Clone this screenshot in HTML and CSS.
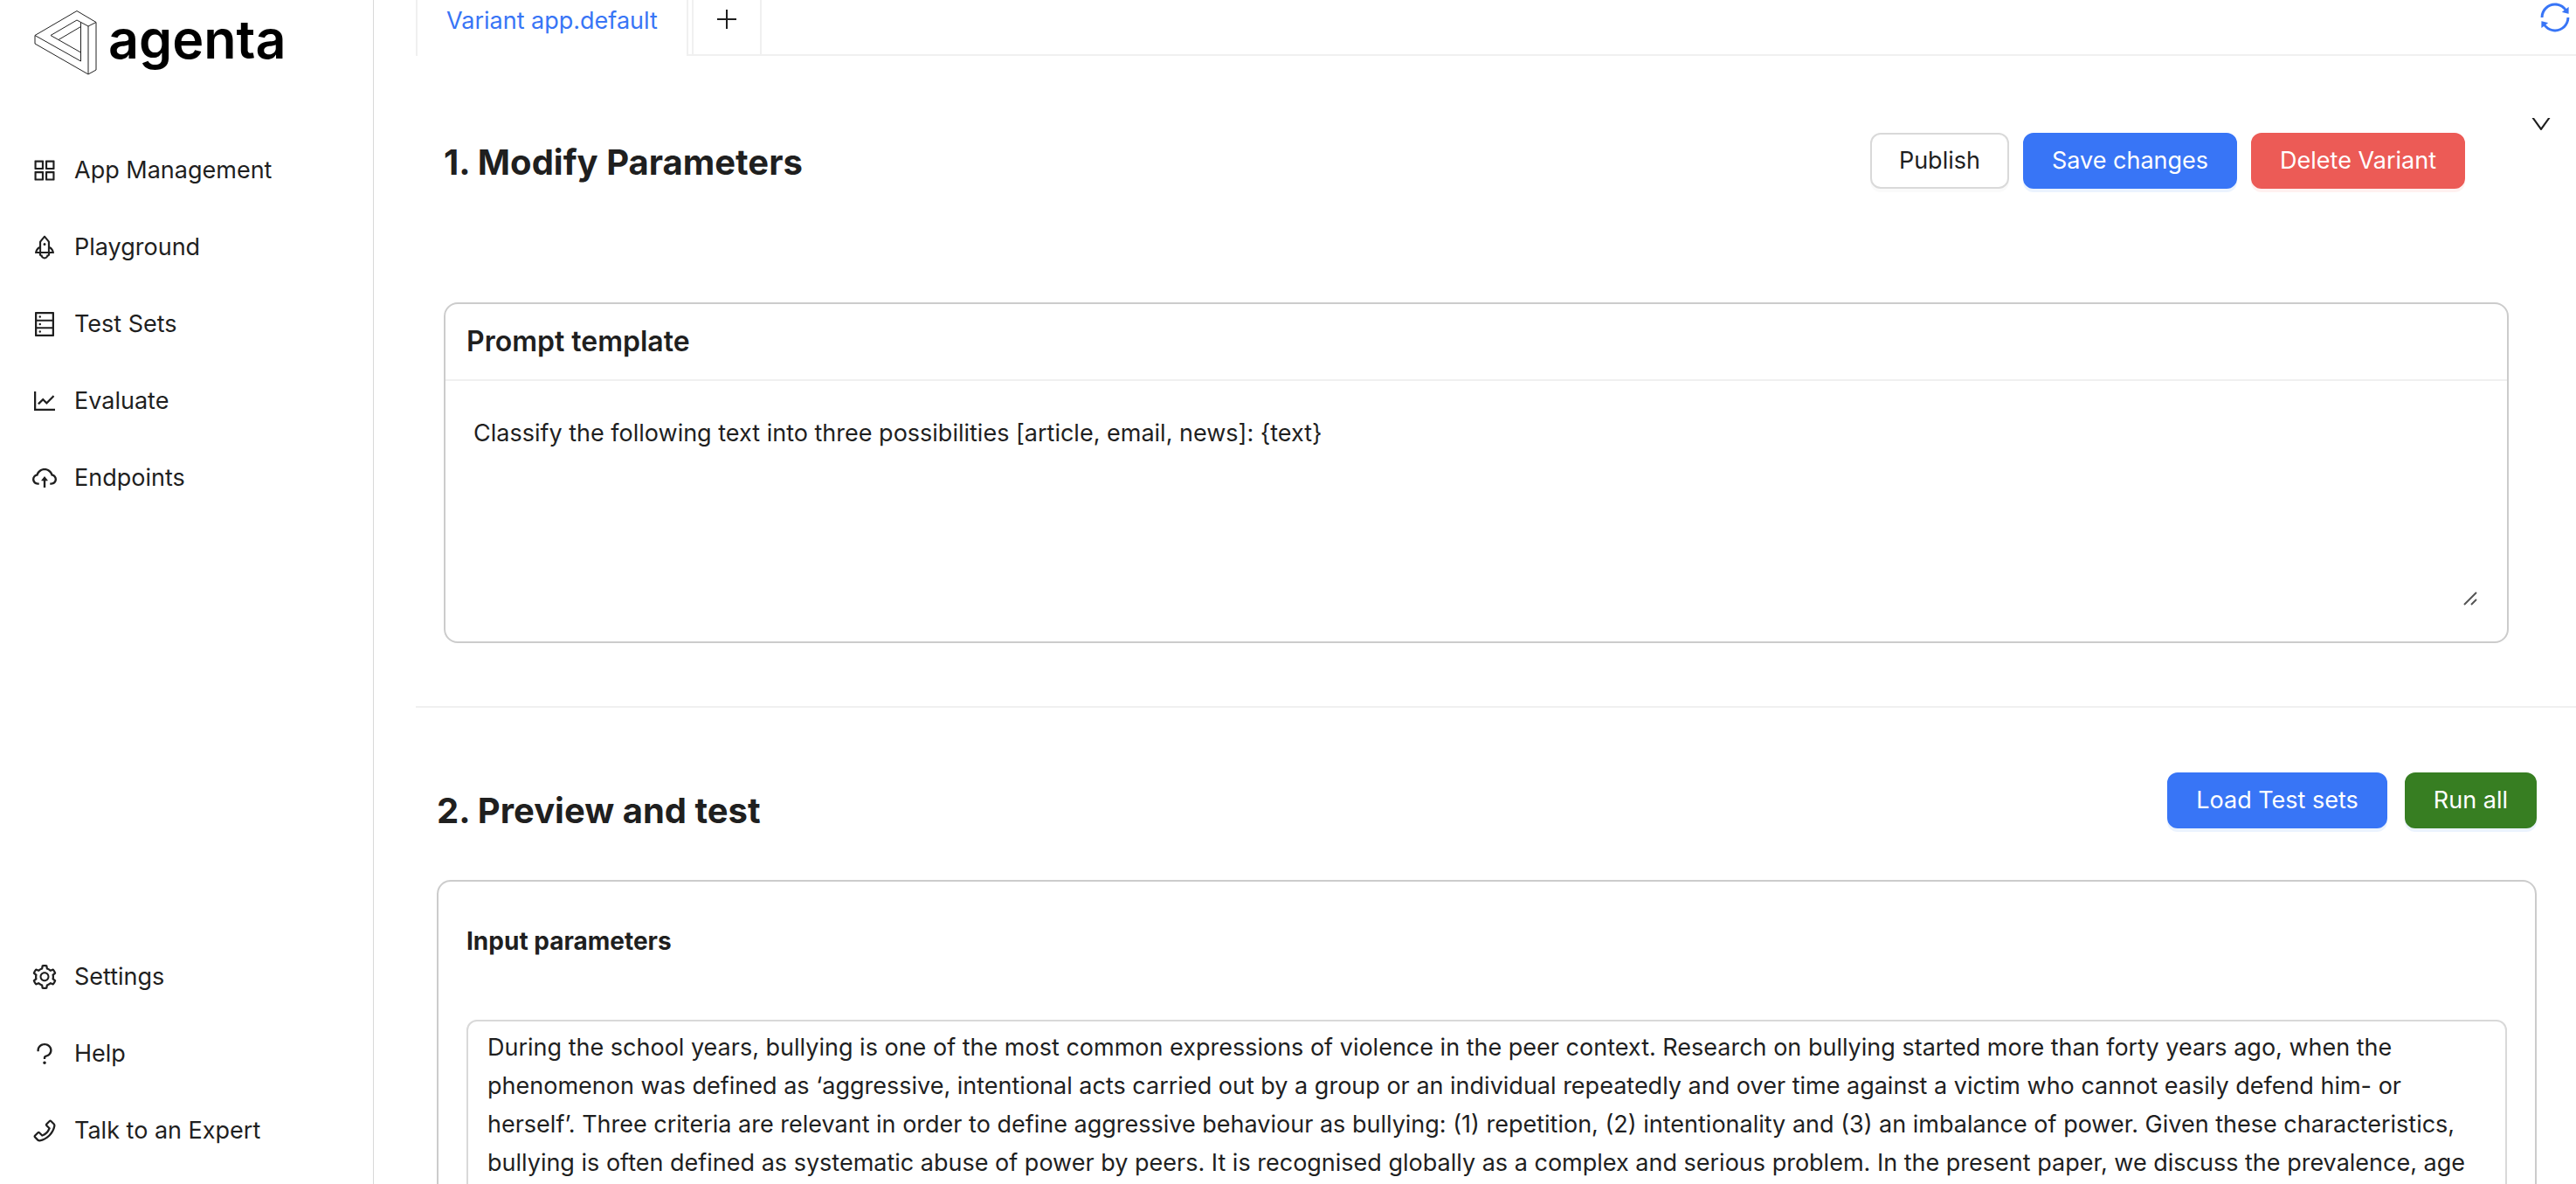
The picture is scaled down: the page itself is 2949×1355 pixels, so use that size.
FILE: index.html
```html
<!DOCTYPE html>
<html lang="en">
<head>
<meta charset="utf-8">
<title>agenta - Playground</title>
<link rel="stylesheet" href="styles.css">
</head>
<body>
<div class="app">
  <aside class="sidebar">
    <a class="logo" href="#">
      <svg class="logo-mark" viewBox="39 10 72 76" fill="none" stroke="#222" stroke-width="1" stroke-linejoin="round" aria-hidden="true">
        <path d="M40 39.500 88 11.500 110 24.500V79L101 84 40 49ZM101 84V29L110 24.500M101 29 88 22 58 39.500 92.500 59M67 44.500 92.500 29.500M92.500 24.500V69L40 39.500"/>
      </svg>
      <span class="logo-name">agenta</span>
    </a>
    <nav class="menu" aria-label="Main">
      <a class="menu-item" href="#"><svg class="icon-menu" viewBox="0 0 1024 1024" aria-hidden="true"><path d="M464 144H160c-8.800 0-16 7.200-16 16v304c0 8.800 7.200 16 16 16h304c8.800 0 16-7.200 16-16V160c0-8.800-7.200-16-16-16zm-52 268H212V212h200v200zm452-268H560c-8.800 0-16 7.200-16 16v304c0 8.800 7.200 16 16 16h304c8.800 0 16-7.200 16-16V160c0-8.800-7.200-16-16-16zm-52 268H612V212h200v200zM464 544H160c-8.800 0-16 7.200-16 16v304c0 8.800 7.200 16 16 16h304c8.800 0 16-7.200 16-16V560c0-8.800-7.200-16-16-16zm-52 268H212V612h200v200zm452-268H560c-8.800 0-16 7.200-16 16v304c0 8.800 7.200 16 16 16h304c8.800 0 16-7.200 16-16V560c0-8.800-7.200-16-16-16zm-52 268H612V612h200v200z"/></svg>App Management</a>
      <a class="menu-item" href="#"><svg class="icon-menu" viewBox="0 0 1024 1024" aria-hidden="true"><path d="M864 736c0-111.600-65.400-208-160-252.900V317.300c0-15.100-5.300-29.700-15.100-41.200L536.500 95.400C530.100 87.800 521 84 512 84s-18.100 3.800-24.500 11.400L335.100 276.100a63.970 63.970 0 00-15.100 41.200v165.800C225.400 528 160 624.400 160 736h156.500c-2.300 7.200-3.500 15-3.500 23.800 0 22.100 7.600 43.700 21.400 60.800a97.200 97.200 0 0043.100 30.600c23.100 54 75.600 88.800 134.500 88.800 29.100 0 57.300-8.600 81.400-24.800 23.600-15.800 41.900-37.900 53-64a97 97 0 0043.100-30.500 97.520 97.520 0 0021.400-60.800c0-8.400-1.100-16.400-3.100-23.800H864zM762.300 621.400c9.400 14.600 17 30.300 22.500 46.600H700V558.700a211.600 211.600 0 0162.300 62.700zM388 483.100V318.800l124-147 124 147V668H388V483.100zM239.200 668c5.500-16.300 13.100-32 22.500-46.600 16.300-25.200 37.500-46.500 62.300-62.700V668h-84.800zm388.900 116.200c-5.200 3-11.200 4.200-17.100 3.400l-19.500-2.400-2.800 19.400c-5.400 37.900-38.400 66.500-76.700 66.500-38.300 0-71.300-28.600-76.700-66.500l-2.800-19.500-19.500 2.500a27.700 27.700 0 01-17.100-3.500c-8.700-5-14.100-14.300-14.100-24.400 0-10.600 5.900-19.400 14.600-23.800h231.300c8.800 4.500 14.600 13.300 14.600 23.800-.1 10.200-5.500 19.600-14.200 24.500zM464 400a48 48 0 1096 0 48 48 0 10-96 0z"/></svg>Playground</a>
      <a class="menu-item" href="#"><svg class="icon-menu" viewBox="0 0 1024 1024" aria-hidden="true"><path d="M832 64H192c-17.700 0-32 14.300-32 32v832c0 17.700 14.300 32 32 32h640c17.700 0 32-14.300 32-32V96c0-17.700-14.300-32-32-32zm-600 72h560v208H232V136zm560 480H232V408h560v208zm0 272H232V680h560v208zM304 240a40 40 0 1080 0 40 40 0 10-80 0zm0 272a40 40 0 1080 0 40 40 0 10-80 0zm0 272a40 40 0 1080 0 40 40 0 10-80 0z"/></svg>Test Sets</a>
      <a class="menu-item" href="#"><svg class="icon-menu" viewBox="0 0 1024 1024" aria-hidden="true"><path d="M888 792H200V168c0-4.400-3.600-8-8-8h-56c-4.400 0-8 3.600-8 8v688c0 4.400 3.600 8 8 8h752c4.400 0 8-3.600 8-8v-56c0-4.400-3.600-8-8-8zM305.800 637.700c3.100 3.100 8.100 3.100 11.300 0l138.300-137.600L583 628.500c3.100 3.100 8.200 3.100 11.300 0l275.400-275.300c3.100-3.100 3.100-8.200 0-11.300l-39.600-39.600a8.030 8.030 0 00-11.300 0l-230 229.900L461.400 404a8.030 8.030 0 00-11.300 0L266.300 586.700a8.030 8.030 0 000 11.300l39.500 39.700z"/></svg>Evaluate</a>
      <a class="menu-item" href="#"><svg class="icon-menu" viewBox="0 0 1024 1024" aria-hidden="true"><path d="M518.300 459a8 8 0 00-12.600 0l-112 141.700a7.980 7.980 0 006.300 12.900h73.900V856c0 4.400 3.600 8 8 8h60c4.400 0 8-3.600 8-8V613.700H624c6.700 0 10.400-7.700 6.300-12.900L518.300 459z"/><path d="M811.400 366.700C765.600 245.900 648.900 160 512.200 160S258.800 245.800 213 366.600C127.300 389.100 64 467.200 64 560c0 110.500 89.500 200 199.900 200H304c4.400 0 8-3.600 8-8v-60c0-4.400-3.600-8-8-8h-40.100c-33.700 0-65.400-13.400-89-37.700-23.500-24.200-36-56.800-34.900-90.600.9-26.400 9.900-51.200 26.200-72.100 16.700-21.300 40.100-36.800 66.100-43.700l37.900-9.900 13.900-36.600c8.600-22.800 20.600-44.100 35.700-63.400a245.600 245.600 0 0152.400-49.900c41.100-28.900 89.500-44.200 140-44.200s98.900 15.300 140 44.200c19.900 14 37.500 30.800 52.400 49.900 15.100 19.300 27.100 40.700 35.700 63.400l13.800 36.500 37.800 10C846.100 454.500 884 503.800 884 560c0 33.100-12.900 64.300-36.300 87.700a123.070 123.070 0 01-87.600 36.300H720c-4.400 0-8 3.600-8 8v60c0 4.400 3.600 8 8 8h40.100C870.500 760 960 670.500 960 560c0-92.700-63.100-170.700-148.600-193.300z"/></svg>Endpoints</a>
    </nav>
    <nav class="menu menu-bottom" aria-label="Support">
      <a class="menu-item" href="#"><svg class="icon-menu" viewBox="0 0 1024 1024" aria-hidden="true"><path d="M924.800 625.700l-65.500-56c3.100-19 4.700-38.400 4.700-57.800s-1.600-38.800-4.700-57.800l65.500-56a32.030 32.030 0 009.300-35.200l-.9-2.600a443.740 443.740 0 00-79.700-137.900l-1.800-2.100a32.120 32.120 0 00-35.100-9.500l-81.300 28.900c-30-24.600-63.500-44-99.700-57.600l-15.700-85a32.050 32.050 0 00-25.800-25.700l-2.700-.5c-52.100-9.400-106.900-9.400-159 0l-2.700.5a32.050 32.050 0 00-25.800 25.700l-15.800 85.400a351.860 351.860 0 00-99 57.400l-81.900-29.100a32 32 0 00-35.100 9.500l-1.800 2.100a446.020 446.020 0 00-79.700 137.900l-.9 2.600c-4.500 12.500-.8 26.500 9.300 35.200l66.300 56.600c-3.100 18.800-4.600 38-4.600 57.100 0 19.200 1.500 38.400 4.600 57.100L99 625.500a32.030 32.030 0 00-9.300 35.200l.9 2.600c18.100 50.400 44.900 96.900 79.700 137.900l1.800 2.100a32.120 32.120 0 0035.100 9.500l81.900-29.100c29.800 24.500 63.100 43.900 99 57.400l15.800 85.400a32.050 32.050 0 0025.800 25.700l2.700.5a449.400 449.400 0 00159 0l2.700-.5a32.050 32.050 0 0025.800-25.700l15.700-85a350 350 0 0099.700-57.600l81.300 28.900a32 32 0 0035.100-9.500l1.800-2.100c34.800-41.100 61.600-87.500 79.700-137.900l.9-2.600c4.500-12.300.8-26.300-9.300-35zM788.300 465.900c2.500 15.100 3.800 30.600 3.800 46.100s-1.300 31-3.800 46.100l-6.600 40.100 74.700 63.900a370.030 370.030 0 01-42.600 73.600L721 702.800l-31.400 25.800c-23.900 19.600-50.500 35-79.300 45.800l-38.100 14.300-17.900 97a377.500 377.500 0 01-85 0l-17.900-97.200-37.800-14.500c-28.500-10.800-55-26.200-78.700-45.700l-31.400-25.900-93.400 33.200c-17-22.900-31.200-47.600-42.600-73.600l75.500-64.500-6.500-40c-2.400-14.900-3.700-30.300-3.700-45.500 0-15.300 1.200-30.600 3.700-45.500l6.500-40-75.500-64.500c11.300-26.100 25.600-50.700 42.600-73.600l93.400 33.200 31.400-25.900c23.700-19.500 50.200-34.900 78.700-45.700l37.900-14.300 17.900-97.200c28.100-3.200 56.800-3.200 85 0l17.900 97 38.100 14.300c28.700 10.800 55.400 26.200 79.300 45.800l31.400 25.800 92.800-32.900c17 22.900 31.200 47.600 42.600 73.600L781.800 426l6.500 39.900zM512 326c-97.200 0-176 78.800-176 176s78.800 176 176 176 176-78.800 176-176-78.800-176-176-176zm79.200 255.200A111.600 111.600 0 01512 614c-29.900 0-58-11.700-79.200-32.800A111.600 111.600 0 01400 502c0-29.900 11.700-58 32.800-79.200C454 401.600 482.100 390 512 390c29.900 0 58 11.600 79.200 32.800A111.600 111.600 0 01624 502c0 29.900-11.700 58-32.800 79.200z"/></svg>Settings</a>
      <a class="menu-item" href="#"><svg class="icon-menu" viewBox="0 0 1024 1024" aria-hidden="true"><path d="M764 280.900c-14-30.600-33.900-58.100-59.300-81.600C653.100 151.400 584.600 125 512 125s-141.100 26.400-192.700 74.200c-25.400 23.600-45.300 51-59.300 81.700-14.600 32-22 65.900-22 100.900v27c0 6.200 5 11.200 11.200 11.200h54c6.200 0 11.200-5 11.200-11.200v-27c0-99.500 88.600-180.400 197.600-180.400s197.600 80.900 197.600 180.400c0 40.800-14.500 79.200-42 111.200-27.200 31.700-65.600 54.400-108.100 64-24.300 5.500-46.200 19.200-61.700 38.800a110.850 110.850 0 00-23.900 68.600v31.400c0 6.200 5 11.200 11.200 11.200h54c6.200 0 11.200-5 11.200-11.200v-31.400c0-15.700 10.900-29.500 26-32.900 58.400-13.200 111.400-44.700 149.300-88.700 19.100-22.300 34-47.100 44.300-74 10.700-27.900 16.100-57.200 16.100-87 0-35-7.400-69-22-100.900zM512 787c-30.900 0-56 25.100-56 56s25.100 56 56 56 56-25.100 56-56-25.100-56-56-56z"/></svg>Help</a>
      <a class="menu-item" href="#"><svg class="icon-menu" viewBox="0 0 1024 1024" aria-hidden="true"><path d="M877.100 238.700L770.600 132.300c-13-13-30.400-20.300-48.800-20.300s-35.800 7.200-48.800 20.300L558.300 246.800c-13 13-20.300 30.500-20.300 48.900 0 18.500 7.200 35.800 20.300 48.900l89.600 89.700a405.460 405.460 0 01-86.400 127.300c-36.700 36.900-79.600 66-127.200 86.600l-89.600-89.700c-13-13-30.400-20.300-48.800-20.300a68.200 68.200 0 00-48.800 20.300L132.300 673c-13 13-20.300 30.500-20.300 48.900 0 18.500 7.200 35.800 20.300 48.900l106.400 106.400c22.200 22.200 52.800 34.900 84.200 34.900 6.500 0 12.800-.5 19.200-1.600 132.400-21.800 263.800-92.300 369.900-198.300C818 606 888.400 474.600 910.400 342.100c6.300-37.600-6.300-76.300-33.300-103.400zm-37.600 91.500c-19.500 117.900-82.900 235.500-178.400 331s-213 158.900-330.900 178.400c-14.800 2.500-30-2.500-40.800-13.200L184.900 721.900 295.700 611l119.800 120 .9.9 21.600-8a481.290 481.290 0 00285.700-285.800l8-21.600-120.800-120.700 110.800-110.900 104.500 104.500c10.800 10.800 15.800 26 13.300 40.800z"/></svg>Talk to an Expert</a>
    </nav>
  </aside>

  <main class="content">
    <div class="tab-bar">
      <div class="tabs" role="tablist">
        <button class="tab" type="button" role="tab" aria-selected="true">Variant app.default</button>
        <button class="tab-add" type="button" aria-label="Add variant">
          <svg class="icon" viewBox="0 0 28 28" fill="none" stroke="currentColor" stroke-width="2" aria-hidden="true"><path d="M14 3V25M3 14H25"/></svg>
        </button>
      </div>
      <button class="icon-button refresh" type="button" aria-label="Refresh">
        <svg class="icon-large" viewBox="0 0 1024 1024" aria-hidden="true"><path d="M168 504.200c1-43.700 10-86.100 26.900-126 17.300-41 42.100-77.700 73.700-109.400S337 212.300 378 195c42.400-17.900 87.400-27 133.900-27s91.500 9.100 133.800 27A341.500 341.500 0 01755 268.800c9.900 9.900 19.200 20.400 27.800 31.400l-60.200 47a8 8 0 003 14.100l175.700 43c5 1.200 9.900-2.600 9.900-7.700l.8-180.900c0-6.700-7.700-10.500-12.900-6.300l-56.400 44.100C765.800 155.100 646.200 92 511.800 92 282.700 92 96.300 275.600 92 503.800a8 8 0 008 8.200h60c4.400 0 7.900-3.500 8-7.800zm756 7.800h-60c-4.400 0-7.900 3.500-8 7.800-1 43.700-10 86.100-26.900 126-17.300 41-42.100 77.800-73.700 109.400A342.450 342.450 0 01512.100 856a342.240 342.240 0 01-243.200-100.800c-9.900-9.900-19.200-20.400-27.800-31.400l60.200-47a8 8 0 00-3-14.100l-175.700-43c-5-1.200-9.900 2.600-9.900 7.700l-.7 181c0 6.700 7.700 10.500 12.900 6.300l56.400-44.100C258.200 868.900 377.800 932 512.200 932c229.200 0 415.500-183.700 419.800-411.800a8 8 0 00-8-8.200z"/></svg>
      </button>
    </div>

    <section class="parameters">
      <header class="parameters-header">
        <h2 class="title">1. Modify Parameters</h2>
        <div class="actions">
          <button class="button" type="button">Publish</button>
          <button class="button button-primary" type="button">Save changes</button>
          <button class="button button-danger" type="button">Delete Variant</button>
        </div>
        <button class="icon-button" type="button" aria-label="Collapse">
          <svg class="icon" viewBox="0 0 1024 1024" aria-hidden="true"><path d="M884 256h-75c-5.100 0-9.900 2.500-12.900 6.600L512 654.200 227.900 262.600c-3-4.100-7.800-6.600-12.900-6.600h-75c-6.500 0-10.300 7.400-6.500 12.700l352.600 486.100c12.800 17.600 39 17.600 51.700 0l352.600-486.100c3.900-5.300.1-12.700-6.400-12.700z"/></svg>
        </button>
      </header>
      <div class="card">
        <label class="card-title" for="prompt">Prompt template</label>
        <div class="prompt-body">
          <textarea class="prompt" id="prompt">Classify the following text into three possibilities [article, email, news]: {text}</textarea>
          <svg class="grip" viewBox="0 0 16 16" fill="none" stroke="#555" stroke-width="2" aria-hidden="true"><path d="M1 15 15 1M9 15 15 9"/></svg>
        </div>
      </div>
    </section>

    <section class="preview">
      <header class="preview-header">
        <h2 class="title">2. Preview and test</h2>
        <div class="preview-actions">
          <button class="button button-primary" type="button">Load Test sets</button>
          <button class="button button-run" type="button">Run all</button>
        </div>
      </header>
      <div class="card card-test">
        <label class="test-label" for="input-text">Input parameters</label>
        <textarea class="test-input" id="input-text" rows="6">During the school years, bullying is one of the most common expressions of violence in the peer context. Research on bullying started more than forty years ago, when the phenomenon was defined as ‘aggressive, intentional acts carried out by a group or an individual repeatedly and over time against a victim who cannot easily defend him- or herself’. Three criteria are relevant in order to define aggressive behaviour as bullying: (1) repetition, (2) intentionality and (3) an imbalance of power. Given these characteristics, bullying is often defined as systematic abuse of power by peers. It is recognised globally as a complex and serious problem. In the present paper, we discuss the prevalence, age</textarea>
      </div>
    </section>
  </main>
</div>
</body>
</html>
```
FILE: styles.css
```css
*, *::before, *::after { box-sizing: border-box; }

body {
  margin: 0;
  background: #fff;
  color: #1f1f1f;
  font-family: Inter, "Liberation Sans", sans-serif;
  font-size: 27px;
  line-height: 44px;
}

button, textarea { font: inherit; color: inherit; }
a { color: inherit; text-decoration: none; }
svg { display: block; flex: none; fill: currentColor; }
svg[fill="none"] { fill: none; }

.app { display: flex; height: 100vh; overflow: hidden; }

.sidebar {
  display: flex;
  flex-direction: column;
  flex: 0 0 428px;
  padding: 11px 8px 21px;
  border-right: 1px solid #d9d9d9;
}

.logo { display: flex; align-items: flex-start; gap: 13px; height: 76px; padding-left: 31px; }
.logo-mark { width: 72px; height: 76px; }
.logo-name {
  color: #000;
  font-size: 61px;
  font-weight: 600;
  line-height: 68px;
}

.menu { display: flex; flex-direction: column; gap: 8px; margin-top: 68px; }
.menu-bottom { margin-top: auto; }
.menu-item { display: flex; align-items: center; gap: 18px; height: 80px; padding-left: 27px; }

.icon { width: 28px; height: 28px; }
.icon-menu { width: 32px; height: 32px; }
.icon-large { width: 40px; height: 40px; }
.icon-button { padding: 0; border: 0; background: none; }
.refresh { color: #3875f6; }

.content { flex: 1; min-width: 0; padding-left: 48px; overflow: hidden; }

.tab-bar {
  display: flex;
  justify-content: space-between;
  align-items: flex-start;
  height: 64px;
  padding-right: 4px;
  box-shadow: inset 0 -2px #f0f0f0;
}
.tabs { display: flex; gap: 4px; }
.tab {
  height: 64px;
  padding: 0 33px 16px;
  border: solid #f0f0f0;
  border-width: 0 2px;
  background: #fff;
  color: #3875f6;
  line-height: 48px;
}
.tab-add {
  display: flex;
  justify-content: center;
  width: 80px;
  height: 64px;
  padding: 8px 0;
  border: solid #f0f0f0;
  border-width: 0 2px 2px;
  background: #fff;
}

.title { margin: 0; font-size: 40px; font-weight: 700; line-height: 48px; }

.parameters { padding: 64px 0 72px 32px; border-bottom: 2px solid #f0f0f0; }
.parameters-header { display: flex; align-items: flex-start; padding-right: 26px; }
.parameters-header .title { flex: 1; padding-top: 34px; }
.actions { display: flex; gap: 16px; padding-top: 24px; margin-right: 73px; }

.button {
  height: 64px;
  padding: 0 31px;
  border: 2px solid #d9d9d9;
  border-radius: 12px;
  background: #fff;
  line-height: 44px;
  box-shadow: 0 4px rgba(0, 0, 0, 0.02);
}
.button-primary { border-color: #3875f6; background: #3875f6; color: #fff; box-shadow: 0 4px #ebf3fe; }
.button-danger { border-color: #ec5b56; background: #ec5b56; color: #fff; box-shadow: 0 4px #fff1f0; }
.button-run { border-color: #377e22; background: #377e22; color: #fff; box-shadow: 0 4px #ebf3fe; }

.card { border: 2px solid #ccc; border-radius: 16px; }
.parameters .card { margin: 130px 77px 0 0; }
.card-title {
  display: block;
  padding: 20px 24px;
  border-bottom: 2px solid #f0f0f0;
  font-size: 32px;
  font-weight: 600;
  line-height: 46px;
}
.prompt-body { position: relative; padding: 30px 32px 38px; }
.prompt {
  display: block;
  width: 100%;
  height: 230px;
  padding: 8px 0;
  border: 0;
  background: none;
  resize: none;
}
.grip { position: absolute; right: 34px; bottom: 41px; width: 16px; height: 16px; }

.preview { padding: 74px 45px 0 24px; }
.preview-header { display: flex; justify-content: space-between; align-items: flex-start; }
.preview-header .title { padding-top: 20px; }
.preview-actions { display: flex; gap: 20px; }

.card-test { margin-top: 55px; padding: 46px 32px 48px; }
.test-label { display: block; font-size: 28px; font-weight: 700; }
.test-input {
  display: block;
  width: 100%;
  margin-top: 68px;
  padding: 8px 22px;
  border: 2px solid #d9d9d9;
  border-radius: 12px;
  background: none;
  resize: none;
  overflow: hidden;
}
```
